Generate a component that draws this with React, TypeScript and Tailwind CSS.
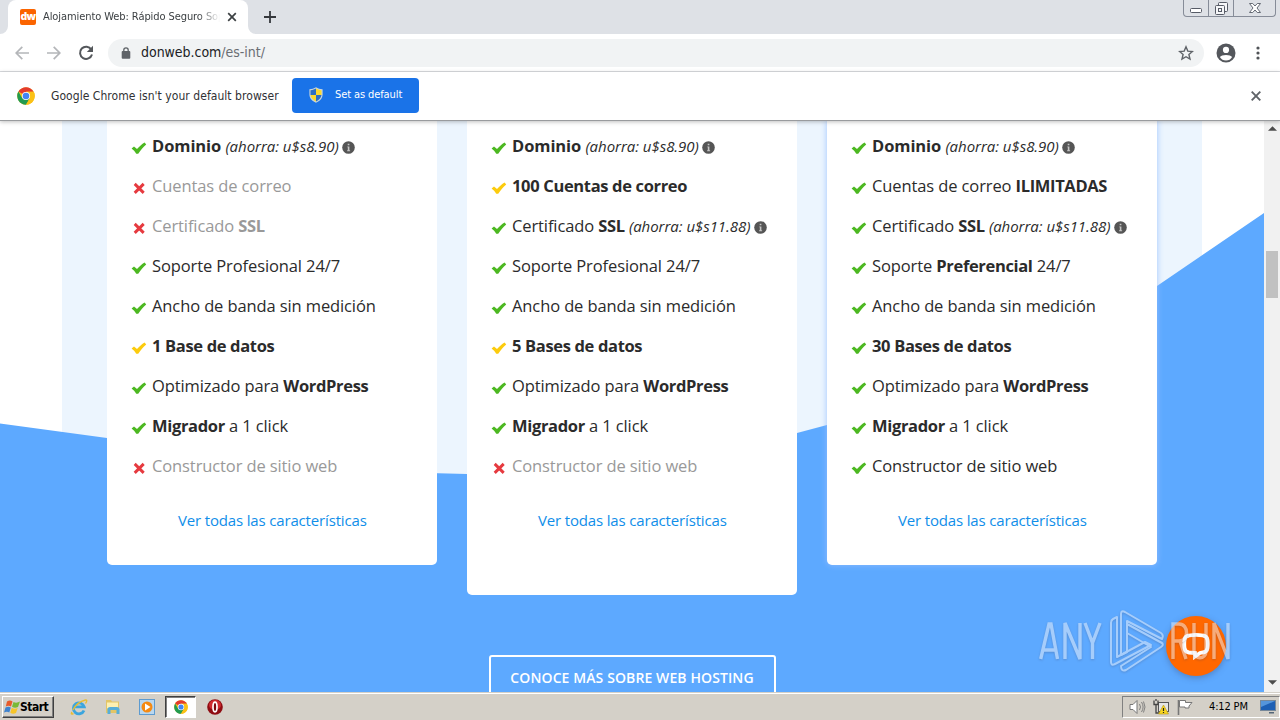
import type { ReactNode } from 'react';

type Mark = 'green' | 'yellow' | 'no';
type Feature = { mark: Mark; text: ReactNode; info?: boolean };

const Strong = ({ children }: { children: ReactNode }) => (
  <b className="tracking-[-0.34px]">{children}</b>
);

const Saving = ({ amount }: { amount: string }) => (
  <i className="text-[15px] tracking-[-0.04px]">(ahorra: u$s{amount})</i>
);

const domain: Feature = {
  mark: 'green',
  text: <><b className="tracking-[-0.08px]">Dominio</b> <Saving amount="8.90" /></>,
  info: true,
};
const certificate: Feature = {
  mark: 'green',
  text: <>Certificado <Strong>SSL</Strong> <Saving amount="11.88" /></>,
  info: true,
};
const bandwidth: Feature = { mark: 'green', text: 'Ancho de banda sin medición' };
const wordpress: Feature = { mark: 'green', text: <>Optimizado para <Strong>WordPress</Strong></> };
const migrator: Feature = { mark: 'green', text: <><Strong>Migrador</Strong> a 1 click</> };

const basic: Feature[] = [
  domain,
  { mark: 'no', text: 'Cuentas de correo' },
  { mark: 'no', text: <>Certificado <Strong>SSL</Strong></> },
  { mark: 'green', text: 'Soporte Profesional 24/7' },
  bandwidth,
  { mark: 'yellow', text: <Strong>1 Base de datos</Strong> },
  wordpress,
  migrator,
  { mark: 'no', text: 'Constructor de sitio web' },
];

const medium: Feature[] = [
  domain,
  { mark: 'yellow', text: <Strong>100 Cuentas de correo</Strong> },
  certificate,
  { mark: 'green', text: 'Soporte Profesional 24/7' },
  bandwidth,
  { mark: 'yellow', text: <Strong>5 Bases de datos</Strong> },
  wordpress,
  migrator,
  { mark: 'no', text: 'Constructor de sitio web' },
];

const advanced: Feature[] = [
  domain,
  { mark: 'green', text: <>Cuentas de correo <Strong>ILIMITADAS</Strong></> },
  certificate,
  { mark: 'green', text: <>Soporte <Strong>Preferencial</Strong> 24/7</> },
  bandwidth,
  { mark: 'green', text: <Strong>30 Bases de datos</Strong> },
  wordpress,
  migrator,
  { mark: 'green', text: 'Constructor de sitio web' },
];

function MarkIcon({ mark }: { mark: Mark }) {
  if (mark === 'no') {
    return (
      <svg viewBox="0 0 16 14" className="mt-[3px] h-[14px] w-4 shrink-0">
        <path d="M3.700 2.900l9 9M12.700 2.900l-9 9" stroke="#e63a3f" strokeWidth="2.900" fill="none" />
      </svg>
    );
  }
  return (
    <svg viewBox="0 0 16 14" className="mt-[3px] h-[14px] w-4 shrink-0">
      <path
        d="M0.6 7.6L3 5.4L6 8.1C8.300 5.300 10.800 3 13.600 1.400L15.200 3.400C12.200 6 9.600 9 7.200 12.800H5.200C4 10.600 2.500 9.100 0.6 7.6Z"
        fill={mark === 'green' ? '#4cb821' : '#fccb0d'}
      />
    </svg>
  );
}

const InfoIcon = () => (
  <svg viewBox="0 0 13 13" className="ml-[3px] mt-[2px] h-[13px] w-[13px] shrink-0">
    <circle cx="6.5" cy="6.5" r="6.3" fill="#555" />
    <path d="M5.700 2.800h1.700v1.500H5.700zM5.300 5.400h2.100v3.900h.7v.9H5.100v-.9h.7v-3h-.5z" fill="#c4c4c4" />
  </svg>
);

function Card({ features, className }: { features: Feature[]; className: string }) {
  return (
    <div className={`w-[330px] shrink-0 rounded-b-[5px] bg-white pl-[24px] pt-[5px] ${className}`}>
      <ul>
        {features.map((f, i) => (
          <li key={i} className={`flex h-10 items-center text-[16.5px] tracking-[-0.11px] ${f.mark === 'no' ? 'text-[#999]' : 'text-[#2b2b2b]'}`}>
            <MarkIcon mark={f.mark} />
            <span className="ml-[5px] whitespace-nowrap">{f.text}</span>
            {f.info && <InfoIcon />}
          </li>
        ))}
      </ul>
      <div className="mt-[24px] pl-[47px] text-[15px] leading-5 tracking-[-0.16px] text-[#108ee9]">
        <a className="whitespace-nowrap">Ver todas las características</a>
      </div>
    </div>
  );
}

const ChromeLogo = ({ className }: { className: string }) => (
  <svg viewBox="0 0 18 18" className={className}>
    <circle cx="9" cy="9" r="8.8" fill="#fbc116" />
    <path d="M9 9L1.4 4.6A8.8 8.8 0 0 1 16.6 4.7H9z" fill="#e33b2e" />
    <path d="M1.4 4.6A8.8 8.8 0 0 0 9 17.8L12.8 11.2L9 9L5.3 11.2z" fill="#229b50" />
    <path d="M16.6 4.7A8.8 8.8 0 0 1 9 17.8L12.8 11.2L13 7L9 4.7z" fill="#fbc116" />
    <circle cx="9" cy="9" r="4.1" fill="#fff" />
    <circle cx="9" cy="9" r="3.3" fill="#4285f4" />
  </svg>
);

const Shield = () => (
  <svg viewBox="0 0 14 16" className="h-4 w-[14px]">
    <path d="M7 .3C9 1.6 11 2.1 13.6 2.2V7.5C13.4 11.5 11 14 7 15.8C3 14 .6 11.5 .4 7.5V2.2C3 2.1 5 1.6 7 .3z" fill="#c7d5dc" />
    <path d="M7 1.6V8H1.5V3.2C4 3 5.500 2.500 7 1.600z" fill="#2c6fc4" />
    <path d="M7 1.6C8.500 2.500 10 3 12.500 3.200V8H7z" fill="#fbd92e" />
    <path d="M1.5 8H7V14.500C4 13 1.800 11 1.500 8z" fill="#fbd92e" />
    <path d="M12.500 8H7V14.500C10 13 12.200 11 12.500 8z" fill="#2c6fc4" />
  </svg>
);

function TabStrip() {
  return (
    <div className="flex h-[34px] shrink-0 items-start justify-between bg-[#dee1e6]">
      <div className="flex h-[34px] items-center">
        <svg viewBox="0 0 8 34" className="h-[34px] w-2"><path d="M8 26A8 8 0 0 1 0 34H8z" fill="#fff" /></svg>
        <div className="flex h-[34px] w-[240px] items-center rounded-t-[8px] bg-white pl-3">
          <div className="flex h-4 w-4 items-center justify-center rounded-[2px] bg-[#fb6400] font-['Open_Sans'] text-[10.5px] font-extrabold leading-none tracking-[-0.6px] text-white">
            <span className="-mt-px">dw</span>
          </div>
          <div className="ml-[7px] w-[177px] whitespace-nowrap text-[11px] tracking-[-0.08px] text-[#3c4043] [mask-image:linear-gradient(to_right,#000_155px,transparent_177px)]">
            Alojamiento Web: Rápido Seguro Sop
          </div>
          <svg viewBox="0 0 10 10" className="ml-[7px] h-[10px] w-[10px]"><path d="M1.200 1.200l7.600 7.600M8.800 1.200L1.200 8.800" stroke="#3c4043" strokeWidth="1.700" /></svg>
        </div>
        <svg viewBox="0 0 8 34" className="h-[34px] w-2"><path d="M0 26A8 8 0 0 0 8 34H0z" fill="#fff" /></svg>
        <svg viewBox="0 0 12 12" className="ml-2 h-3 w-3"><path d="M6 0v12M0 6h12" stroke="#35383c" strokeWidth="1.800" /></svg>
      </div>
      <div className="mr-1 flex h-[17px] w-[93px] rounded-b-[4px] border border-t-0 border-[#868c98]">
        <div className="flex w-[25px] items-end justify-center border-r border-[#868c98] pb-[3px]">
          <svg viewBox="0 0 13 5" className="h-[5px] w-[13px]"><rect x=".5" y=".5" width="11" height="4" rx="1" fill="#fff" stroke="#565b66" /></svg>
        </div>
        <div className="flex w-[25px] items-start justify-center border-r border-[#868c98] pt-[2px]">
          <svg viewBox="0 0 13 13" className="h-[13px] w-[13px]" fill="#f5f6f8" stroke="#565b66">
            <rect x="3.500" y=".5" width="9" height="9" rx="1" />
            <rect x=".5" y="3.500" width="9" height="9" rx="1" />
            <rect x="3.500" y="6.500" width="3" height="3" />
          </svg>
        </div>
        <div className="flex flex-1 items-start justify-center pt-[3px]">
          <svg viewBox="0 0 12 10" className="h-[10px] w-3"><path d="M.5 .5h3.200L6 3L8.300 .5h3.200L8 5l3.500 4.500H8.300L6 7L3.700 9.500H.5L4 5z" fill="#fff" stroke="#565b66" strokeWidth=".9" /></svg>
        </div>
      </div>
    </div>
  );
}

function Toolbar() {
  return (
    <div className="flex h-[38px] shrink-0 items-center border-b border-[#dadce0] bg-white pl-[15px]">
      <svg viewBox="0 0 14 14" className="h-[14px] w-[14px]"><path d="M14 7H1.500M7.300 .8L1.200 7l6.100 6.200" fill="none" stroke="#b4b6b9" strokeWidth="1.700" /></svg>
      <svg viewBox="0 0 14 14" className="ml-[18px] h-[14px] w-[14px]"><path d="M0 7h12.500M6.700 .8L12.800 7l-6.100 6.200" fill="none" stroke="#b4b6b9" strokeWidth="1.700" /></svg>
      <svg viewBox="0 0 16 16" className="ml-[17px] h-4 w-4"><path d="M13.300 4.500A6.100 6.100 0 1 0 14 9.500" fill="none" stroke="#54575b" strokeWidth="2" /><path d="M15 .8V7H8.800z" fill="#54575b" /></svg>
      <div className="ml-[14px] flex h-7 w-[1096px] items-center rounded-full bg-[#f1f3f4] pl-[13px] pr-[10px]">
        <svg viewBox="0 0 10 12" className="h-3 w-[10px]"><rect x=".7" y="4" width="8.600" height="7.800" rx="1" fill="#5f6368" /><path d="M2.800 4.500V3a2.200 2.200 0 0 1 4.400 0v1.500" fill="none" stroke="#5f6368" strokeWidth="1.300" /></svg>
        <div className="ml-[10px] flex-1 whitespace-nowrap text-[14px] tracking-[-0.03px] text-[#202124]">
          donweb.com<span className="text-[#6a6e73]">/es-int/</span>
        </div>
        <svg viewBox="0 0 16 16" className="h-4 w-4"><path d="M8 1.800l1.800 4.300 4.600.4-3.500 3 1.100 4.600L8 11.700l-4 2.400 1.100-4.600-3.500-3 4.600-.4z" fill="none" stroke="#5f6368" strokeWidth="1.400" /></svg>
      </div>
      <svg viewBox="0 0 20 20" className="ml-3 h-5 w-5"><circle cx="10" cy="10" r="9.500" fill="#54575c" /><circle cx="10" cy="6.900" r="3.100" fill="#fff" /><path d="M3.900 14c1.500-2.800 10.700-2.800 12.200 0A7 7 0 0 1 3.900 14z" fill="#fff" /></svg>
      <svg viewBox="0 0 4 14" className="ml-5 h-[14px] w-1" fill="#505357"><circle cx="2" cy="2" r="1.600" /><circle cx="2" cy="7" r="1.600" /><circle cx="2" cy="12" r="1.600" /></svg>
    </div>
  );
}

function InfoBar() {
  return (
    <div className="z-10 flex h-[49px] shrink-0 items-center border-b border-[#999b9e] bg-white pl-[17px] pr-[19px] shadow-[0_1px_4px_rgba(0,0,0,0.25)]">
      <ChromeLogo className="h-[18px] w-[18px]" />
      <div className="ml-4 w-[241px] whitespace-nowrap text-[12px] tracking-[0.05px] text-[#303134]">Google Chrome isn't your default browser</div>
      <button className="mb-[2px] flex h-[35px] w-[127px] items-center rounded-[4px] bg-[#1a73e8] pl-[17px] text-[11px] text-white">
        <Shield />
        <span className="ml-[12px] whitespace-nowrap tracking-[-0.1px]">Set as default</span>
      </button>
      <svg viewBox="0 0 10 10" className="ml-auto h-[10px] w-[10px]"><path d="M.7 .7l8.600 8.600M9.300 .7L.7 9.300" stroke="#5f6368" strokeWidth="1.900" /></svg>
    </div>
  );
}

function Watermark() {
  return (
    <div className="absolute left-[1039px] top-[484px] flex h-[74px] w-[200px] items-center opacity-50">
      <svg viewBox="0 0 195 74" className="h-[74px] w-[195px] drop-shadow-[0_1px_1px_rgba(60,60,90,0.5)]" fill="none" stroke="#eef1f8">
        <g strokeWidth="3.400">
          <path d="M1.700 54L10 19H12L18.500 54M4 45H17" />
          <path d="M26 54V18L41 54V18" />
          <path d="M46 18L53.500 38L61 18M53.500 37V54" />
          <path d="M134 54V19H140C150 19 150 36 140 36H134M141 36L147 54" />
          <path d="M155 18V46C155 55 167 55 167 46V18" />
          <path d="M175 54V18L189 54V18" />
        </g>
        <g strokeWidth="2" strokeLinejoin="round">
          <path d="M78 12L74 14Q72 15 72 18V57Q72 61 76 59L112 40L106 37L78 52Z" />
          <path d="M82 50V9Q82 5 86 7L122 28Q125 30 123 34L88 16V47Z" />
          <path d="M88 19L123 38Q125 40 122 42L87 65Q82 67 82 61L112 42L88 28Z" />
        </g>
      </svg>
    </div>
  );
}

function ScrollBar() {
  return (
    <div className="flex w-4 shrink-0 flex-col items-center bg-[#f1f1f1]">
      <svg viewBox="0 0 10 5" className="mt-[5px] h-[5px] w-[9px]"><path d="M0 5L5 0l5 5z" fill="#4c4c4c" /></svg>
      <div className="mt-[120px] h-[47px] w-3 bg-[#c1c1c1]" />
      <svg viewBox="0 0 10 5" className="mb-[7px] mt-auto h-[5px] w-[9px]"><path d="M0 0h10L5 5z" fill="#4c4c4c" /></svg>
    </div>
  );
}

function PageView() {
  return (
    <div className="flex h-[571px] shrink-0 overflow-hidden bg-white">
      <div className="relative flex-1 overflow-hidden font-['Open_Sans',sans-serif]">
        <svg viewBox="0 0 1264 571" className="absolute inset-0 h-full w-full">
          <rect x="62" width="1140" height="571" fill="#ecf5fe" />
          <path d="M0 302.500L107 317L390 351L467 353L640 355L797 312L827 304L1157 165L1264 92V571H0z" fill="#5da9ff" />
        </svg>
        <div className="relative flex items-start gap-[30px] pl-[107px]">
          <Card features={basic} className="h-[444px]" />
          <Card features={medium} className="h-[474px]" />
          <Card features={advanced} className="h-[444px] shadow-[0_0_6px_rgba(150,190,255,0.9)]" />
        </div>
        <div className="relative mt-[60px] flex justify-center">
          <div className="flex h-[46px] w-[287px] items-center justify-center whitespace-nowrap rounded-[3px] border-2 border-white pb-[2px] text-[14px] font-semibold tracking-[0.1px] text-white">
            CONOCE MÁS SOBRE WEB HOSTING
          </div>
        </div>
        <div className="absolute left-[1166px] top-[495px] flex h-[60px] w-[60px] items-center justify-center rounded-full bg-[#ff6700] shadow-[0_2px_6px_rgba(60,60,90,0.35)]">
          <svg viewBox="0 0 28 28" className="h-7 w-7"><path d="M7 3.500C12 2.500 16 2.500 21 3.500Q25 4 25.500 8Q26 12 25.500 16Q25 20 21 20.500L18 21L13 24.500V21L7 20.500Q3 20 2.500 16Q2 12 2.500 8Q3 4 7 3.500z" fill="none" stroke="#fff" strokeWidth="3.800" /></svg>
        </div>
        <Watermark />
      </div>
      <ScrollBar />
    </div>
  );
}

function TaskBar() {
  return (
    <div className="flex h-[28px] shrink-0 items-center border-t border-[#d4d0c8] bg-[#d4d0c8] pl-[2px] shadow-[inset_0_1px_0_#fff]">
      <div className="mt-px flex h-[22px] w-[52px] items-center border border-b-[#404040] border-l-white border-r-[#404040] border-t-white pl-[1px] shadow-[inset_-1px_-1px_0_#808080]">
        <svg viewBox="0 0 17 16" className="h-4 w-[17px]">
          <path d="M3 2.500Q6 .5 8.500 2.500L7 7.500Q4.500 6 1.800 7.500z" fill="#e85b2a" />
          <path d="M9.500 3Q12.500 4.500 16 2.500L14 8Q11 9.500 8 7.800z" fill="#79b935" />
          <path d="M1.500 8.500Q4.500 7 6.800 8.500L5.300 13.500Q3 12 0 13.500z" fill="#3f83cf" />
          <path d="M7.800 8.800Q10.500 10.500 13.700 9L12 14Q9 15.500 6.300 13.800z" fill="#f7c52a" />
        </svg>
        <span className="-ml-px text-[12px] font-bold tracking-[-0.5px] text-black">Start</span>
      </div>
      <svg viewBox="0 0 18 18" className="ml-[16px] mt-px h-[18px] w-[18px]">
        <path d="M14 12.500A5.500 5.500 0 1 1 14.200 8.800H5" fill="none" stroke="#3ba5de" strokeWidth="2.800" />
        <path d="M2 14Q0 17 3.500 15.500M3 12Q7 4 15.500 2Q18 1.500 15.500 5.500" fill="none" stroke="#e8bd32" strokeWidth="1.400" />
      </svg>
      <svg viewBox="0 0 16 16" className="ml-[17px] mt-px h-4 w-4">
        <path d="M1 1h5l1 1.500h7V14H1z" fill="#e3c566" /><path d="M2 3.500h11v6H2z" fill="#fdf0b2" />
        <path d="M2.500 15V9.500Q3 8 5 8h7q2 0 2.500 2V15h-3v-4h-6v4z" fill="#57aed8" />
      </svg>
      <svg viewBox="0 0 16 16" className="ml-[18px] mt-px h-4 w-4">
        <rect x=".5" y=".5" width="15" height="15" fill="#b9d7ef" stroke="#5d9bd0" /><circle cx="8" cy="8" r="5.500" fill="#f58a12" /><path d="M6 4.500l5.500 3.500L6 11.500z" fill="#fff" />
      </svg>
      <div className="ml-[10px] mt-px flex h-[22px] w-[31px] items-center justify-center border border-b-white border-l-[#404040] border-r-white border-t-[#404040] bg-white shadow-[inset_1px_1px_0_#808080]">
        <ChromeLogo className="h-[14px] w-[14px]" />
      </div>
      <svg viewBox="0 0 16 16" className="ml-[11px] mt-px h-4 w-4"><circle cx="8" cy="8" r="7.800" fill="#8f0c12" /><ellipse cx="8" cy="6" rx="6" ry="5" fill="#d02b30" /><ellipse cx="8" cy="8" rx="2" ry="4.800" fill="#7b080d" stroke="#fff" strokeWidth="1.700" /></svg>
      <div className="ml-auto mt-px flex h-[22px] w-[158px] items-center border border-b-white border-l-[#808080] border-r-white border-t-[#808080] pl-[6px]">
        <svg viewBox="0 0 17 16" className="h-4 w-[17px]" fill="none" stroke="#777"><path d="M1 5.500h3l4-4v13l-4-4H1z" fill="#fff" /><path d="M10.500 5q2 3 0 6M12.500 3q3.200 5 0 10M14.500 2.500q3 5.500 0 11" strokeWidth=".9" /></svg>
        <svg viewBox="0 0 16 16" className="ml-[7px] h-4 w-4" fill="none">
          <rect x="5.500" y="3.500" width="10" height="9" fill="#e4e4e4" stroke="#555" /><path d="M1 1.500v4h4v-4M3 0v2M3 5.500V14h4" stroke="#444" strokeWidth="1.300" />
          <path d="M10.500 6L15.500 15H5.500z" fill="#f8d620" stroke="#b69611" strokeWidth=".6" /><path d="M10.500 9v3M10.500 13v1" stroke="#222" strokeWidth="1.200" />
        </svg>
        <svg viewBox="0 0 16 16" className="ml-[8px] h-4 w-4"><path d="M1.500 1v15" stroke="#777" strokeWidth="1.600" /><path d="M2.500 1.500h6v2h6.500l-3 3.500v2H8v-1H2.500z" fill="#fff" stroke="#777" /></svg>
        <span className="ml-[16px] w-[39px] whitespace-nowrap text-[11px] tracking-[-0.15px] text-black">4:12 PM</span>
        <svg viewBox="0 0 16 14" className="ml-[12px] h-[14px] w-4"><rect x=".5" y=".5" width="15" height="10" fill="#1d5fb4" stroke="#789" /><path d="M1 1h14L1 7z" fill="#5595db" /><path d="M9 12h5v1.500H9z" fill="#567" /></svg>
      </div>
    </div>
  );
}

export default function App() {
  return (
    <div className="flex h-[720px] w-[1280px] flex-col overflow-hidden bg-white font-['DejaVu_Sans_Condensed','DejaVu_Sans',sans-serif]">
      <TabStrip />
      <Toolbar />
      <InfoBar />
      <PageView />
      <TaskBar />
    </div>
  );
}
